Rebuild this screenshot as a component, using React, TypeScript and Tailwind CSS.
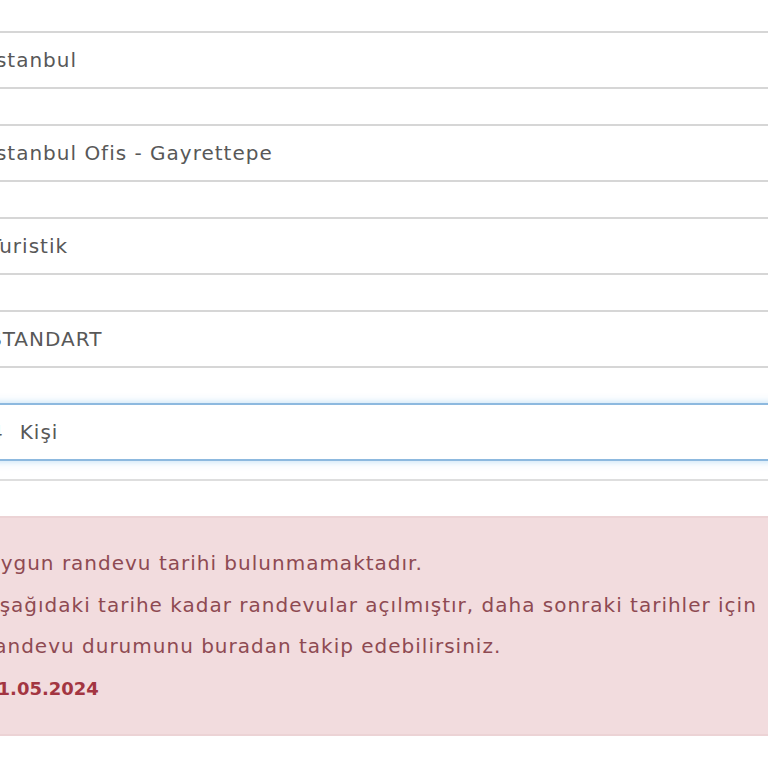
import React from "react";

const inputs = [
  { text: "İstanbul" },
  { text: "İstanbul Ofis - Gayrettepe" },
  { text: "Turistik" },
  { text: "STANDART" },
];

export default function App() {
  return (
    <div
      className="w-[768px] h-[768px] bg-white overflow-hidden"
      style={{ fontFamily: '"DejaVu Sans", "Noto Sans", sans-serif' }}
    >
      <div className="ml-[-30px] w-[860px] pt-[31px] flex flex-col">
        <div className="flex flex-col gap-[35px]">
          {inputs.map((it, i) => (
            <div
              key={i}
              className="h-[58px] border-2 border-[#d6d6d6] bg-white flex items-center pl-[17px] text-[20px] tracking-[1px] text-[#585858]"
            >
              {it.text}
            </div>
          ))}
          <div className="h-[58px] border-2 border-[#8db9df] bg-white flex items-center pl-[18px] text-[20px] tracking-[1px] text-[#585858] shadow-[0_0_8px_rgba(102,175,233,0.45)]">
            <span>4</span>
            <span className="ml-[16px]">Kişi</span>
          </div>
        </div>
        <div className="mt-[18px] h-[2px] bg-[#dedede]" />
        <div className="mt-[35px] h-[220px] border-2 border-[#ecd3d5] bg-[#f2dcde] pt-[25px] pl-[13px] text-[20px] tracking-[1px] leading-[41.5px] text-[#8e4a52]">
          <div>Uygun randevu tarihi bulunmamaktadır.</div>
          <div>Aşağıdaki tarihe kadar randevular açılmıştır, daha sonraki tarihler için</div>
          <div>randevu durumunu buradan takip edebilirsiniz.</div>
          <div className="font-bold text-[18px] tracking-normal text-[#a33541]">31.05.2024</div>
        </div>
      </div>
    </div>
  );
}
